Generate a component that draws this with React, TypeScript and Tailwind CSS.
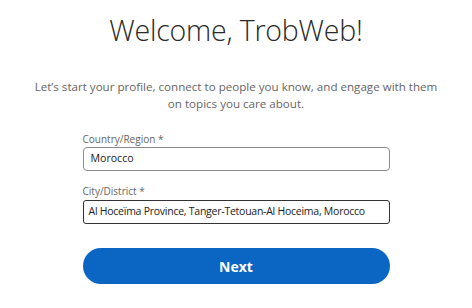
export default function App() {
  return (
    <div
      className="w-[472px] h-[308px] bg-white flex flex-col items-center"
      style={{ fontFamily: '"Open Sans", "Noto Sans", sans-serif' }}
    >
      <h1 className="mt-[12px] text-[28.5px] leading-[36px] font-light text-[#2a2a2a] tracking-[-0.2px]">
        Welcome, TrobWeb!
      </h1>

      <p className="mt-[30px] text-center text-[11.6px] leading-[17px] text-[#666]">
        Let’s start your profile, connect to people you know, and engage with them
        <br />
        on topics you care about.
      </p>

      <div className="mt-[21px] w-[307px] flex flex-col">
        <label className="text-[10px] leading-[12px] text-[#666]">Country/Region *</label>
        <div className="mt-[2px] h-[24px] border border-[#8c8c8c] rounded-[4px] px-[7px] flex items-center text-[10.6px] text-[#222]">
          Morocco
        </div>

        <label className="mt-[14px] text-[10px] leading-[12px] text-[#666]">City/District *</label>
        <div className="mt-[3px] h-[24px] border border-[#333] rounded-[3px] px-[5px] flex items-center text-[10.5px] tracking-[-0.25px] text-[#222] whitespace-nowrap">
          Al Hoceïma Province, Tanger-Tetouan-Al Hoceima, Morocco
        </div>

        <button className="mt-[24px] h-[36px] w-full rounded-full bg-[#0a66c2] text-white text-[14px] font-bold">
          Next
        </button>
      </div>
    </div>
  );
}
